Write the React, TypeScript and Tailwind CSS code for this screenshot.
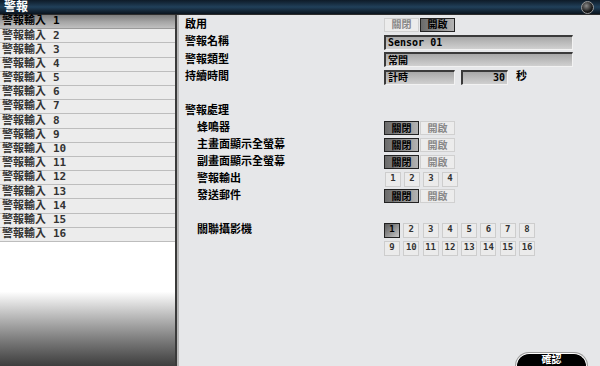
import React from "react";

const font = "font-['DejaVu_Sans_Mono','Noto_Sans_CJK_TC',monospace]";

const Toggle = ({ on }: { on: boolean }) => (
  <div className="flex gap-[1px]">
    <div
      className={
        on
          ? "w-[35px] h-[14px] flex items-center justify-center text-[10px] text-[#888] bg-[#ececec] border border-[#d0d0d0]"
          : "w-[35px] h-[14px] flex items-center justify-center text-[10px] text-black bg-gradient-to-r from-[#6a6a6a] to-[#b4b4b4] border border-[#222]"
      }
    >
      關閉
    </div>
    <div
      className={
        on
          ? "w-[35px] h-[14px] flex items-center justify-center text-[10px] text-black bg-gradient-to-r from-[#6a6a6a] to-[#b4b4b4] border border-[#222]"
          : "w-[35px] h-[14px] flex items-center justify-center text-[10px] text-[#888] bg-[#ececec] border border-[#d0d0d0]"
      }
    >
      開啟
    </div>
  </div>
);

const NumBox = ({ n, active }: { n: number; active?: boolean }) => (
  <div
    className={
      active
        ? "w-[16px] h-[15px] flex items-center justify-center text-[9px] text-black bg-gradient-to-br from-[#5a5a5a] to-[#c8c8c8] border border-[#222]"
        : "w-[16px] h-[15px] flex items-center justify-center text-[9px] text-[#333] bg-[#ebebeb] border border-[#cdcdcd]"
    }
  >
    {n}
  </div>
);

const Field = ({ children, className }: { children: React.ReactNode; className: string }) => (
  <div
    className={
      "h-[15px] flex items-center px-[2px] text-[10px] text-black bg-gradient-to-b from-[#a8a8a8] to-[#d0d0d0] border-t-2 border-l-2 border-t-[#3a3a3a] border-l-[#3a3a3a] border-b border-r border-b-[#f2f2f2] border-r-[#f2f2f2] " +
      className
    }
  >
    {children}
  </div>
);

export default function App() {
  const inputs = Array.from({ length: 16 }, (_, i) => i + 1);
  const cams1 = [1, 2, 3, 4, 5, 6, 7, 8];
  const cams2 = [9, 10, 11, 12, 13, 14, 15, 16];

  return (
    <div className={"w-[600px] h-[366px] overflow-hidden flex flex-col bg-[#e6e7e9] font-bold " + font}>
      {/* title bar */}
      <div className="h-[15px] flex items-center justify-between bg-gradient-to-b from-[#0e1b28] via-[#21405a] to-[#0a141e] border-b border-[#2c2c2c]">
        <span className="pl-[4px] text-[12px] leading-none text-white">警報</span>
        <div className="mr-[6px] w-[13px] h-[13px] rounded-full bg-[radial-gradient(circle_at_40%_35%,#8a8a8a,#1a1a1a_60%,#000)] border border-[#9a9a9a]" />
      </div>

      <div className="flex flex-1">
        {/* left list */}
        <div className="w-[175px] flex flex-col bg-white">
          {inputs.map((n) => (
            <div
              key={n}
              className={
                n === 1
                  ? "h-[14.2px] flex items-center pl-[2px] text-[11px] text-black bg-gradient-to-b from-[#7c7c7c] via-[#a4a4a4] to-[#c0c0c0] border-b border-[#9a9a9a]"
                  : "h-[14.2px] flex items-center pl-[2px] text-[11px] text-[#333] bg-[#ececec] border-b border-[#bdbdbd]"
              }
            >
              <span>警報輸入</span>
              <span className="ml-[7px]">{n}</span>
            </div>
          ))}
          <div className="flex-1 bg-gradient-to-b from-white from-[40%] to-[#3e3e3e]" />
        </div>
        <div className="w-[2px] bg-[#3a3a3a]" />
        <div className="w-[2px] bg-[#b8b8b8]" />

        {/* right panel */}
        <div className="flex-1 flex flex-col pl-[6px] pt-[1px] text-[11px] text-black">
          <div className="flex items-center h-[17.5px]">
            <span className="w-[199px]">啟用</span>
            <Toggle on />
          </div>
          <div className="flex items-center h-[17.5px]">
            <span className="w-[199px]">警報名稱</span>
            <Field className="w-[189px]">Sensor 01</Field>
          </div>
          <div className="flex items-center h-[17.5px]">
            <span className="w-[199px]">警報類型</span>
            <Field className="w-[189px]">常開</Field>
          </div>
          <div className="flex items-center h-[17.5px]">
            <span className="w-[199px]">持續時間</span>
            <Field className="w-[71px]">計時</Field>
            <Field className="w-[47px] ml-[6px] justify-end">30</Field>
            <span className="ml-[8px]">秒</span>
          </div>

          <div className="flex items-center h-[17px] mt-[16.5px]">
            <span>警報處理</span>
          </div>
          <div className="flex flex-col pl-[12px]">
            <div className="flex items-center h-[17px]">
              <span className="w-[187px]">蜂鳴器</span>
              <Toggle on={false} />
            </div>
            <div className="flex items-center h-[17px]">
              <span className="w-[187px]">主畫面顯示全螢幕</span>
              <Toggle on={false} />
            </div>
            <div className="flex items-center h-[17px]">
              <span className="w-[187px]">副畫面顯示全螢幕</span>
              <Toggle on={false} />
            </div>
            <div className="flex items-center h-[17px]">
              <span className="w-[188px]">警報輸出</span>
              <div className="flex gap-[3px]">
                {[1, 2, 3, 4].map((n) => (
                  <NumBox key={n} n={n} />
                ))}
              </div>
            </div>
            <div className="flex items-center h-[17px]">
              <span className="w-[187px]">發送郵件</span>
              <Toggle on={false} />
            </div>

            <div className="flex mt-[18px]">
              <span className="w-[187px] h-[15px] flex items-center">關聯攝影機</span>
              <div className="flex flex-col gap-[3px]">
                <div className="flex gap-[3.3px]">
                  {cams1.map((n) => (
                    <NumBox key={n} n={n} active={n === 1} />
                  ))}
                </div>
                <div className="flex gap-[3.3px]">
                  {cams2.map((n) => (
                    <NumBox key={n} n={n} />
                  ))}
                </div>
              </div>
            </div>
          </div>

          <div className="mt-auto flex justify-end pr-[13px]">
            <div className="w-[71px] h-[13px] rounded-t-full bg-black border border-b-0 border-white ring-1 ring-[#9a9a9a] flex items-center justify-center text-[10px] leading-none text-white">
              確認
            </div>
          </div>
        </div>
      </div>
    </div>
  );
}
